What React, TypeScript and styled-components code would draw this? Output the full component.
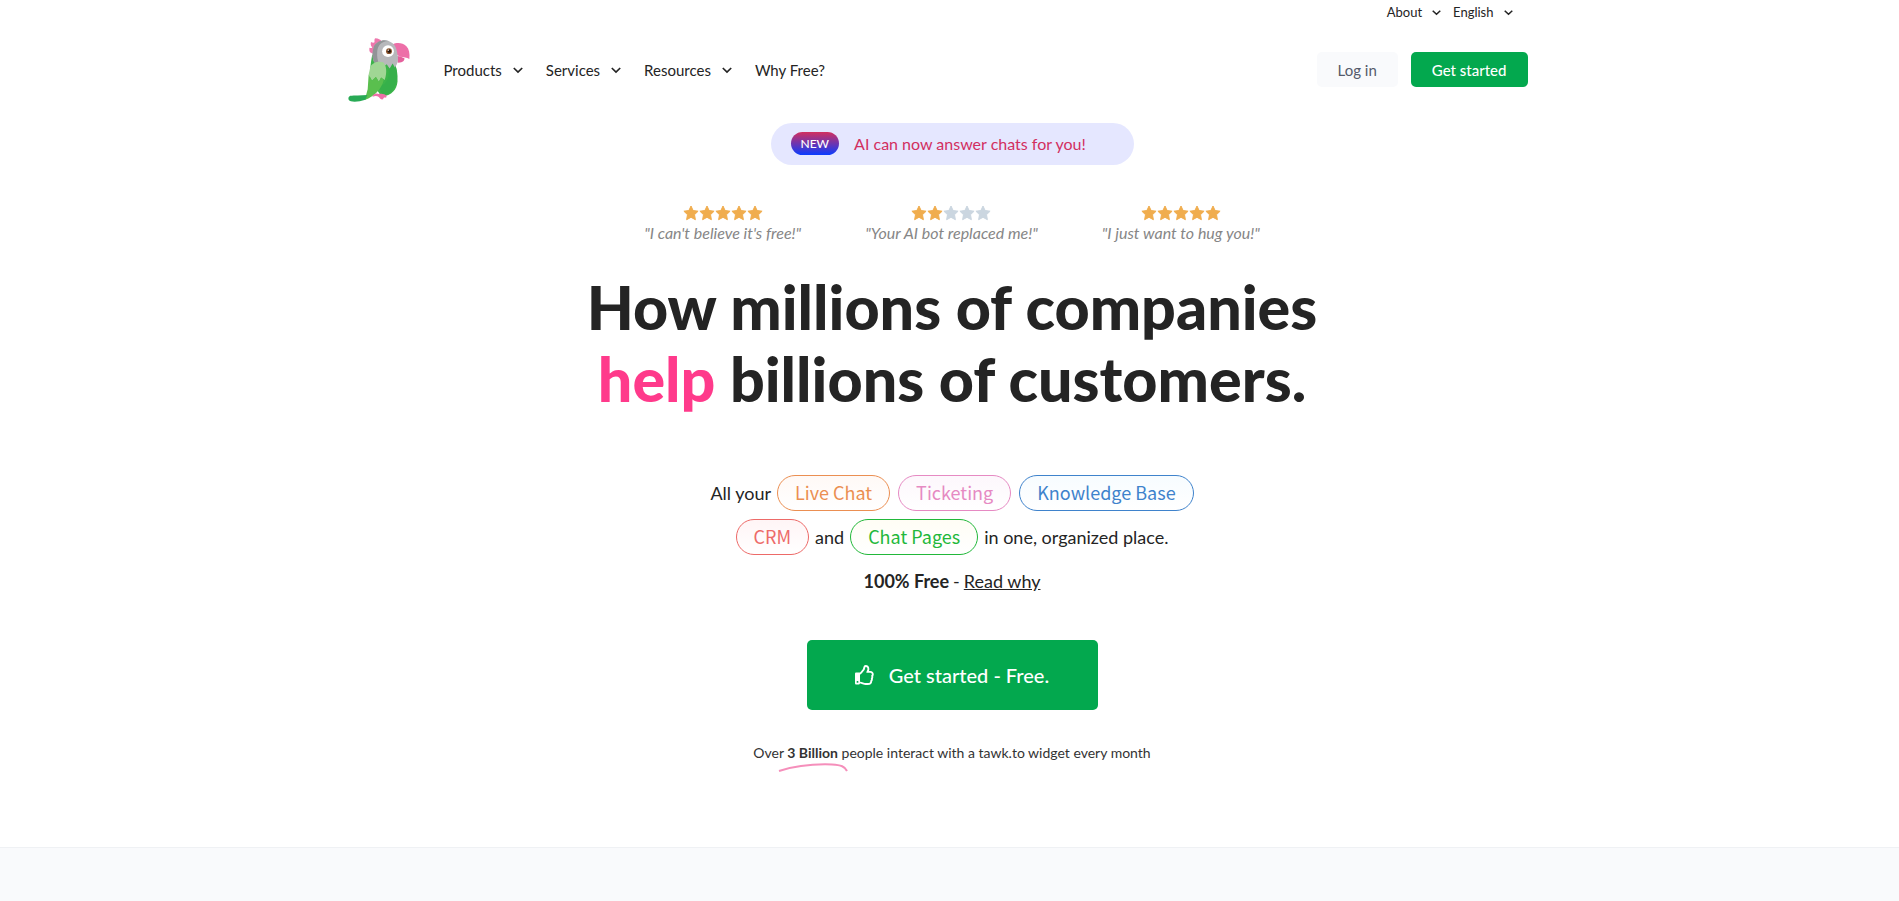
import React from "react";
import styled, { createGlobalStyle } from "styled-components";
import { FaRegThumbsUp } from "react-icons/fa";

const GlobalStyle = createGlobalStyle`
  * { box-sizing: border-box; }
  body {
    margin: 0;
    background: #fff;
    color: #242424;
    font-family: Lato, "Liberation Sans", sans-serif;
  }
  button { font-family: inherit; border: 0; cursor: pointer; }
  a { color: inherit; text-decoration: none; }
`;

const Page = styled.div`
  display: flex;
  flex-direction: column;
  min-height: 100vh;
`;

const Shell = styled.div`
  width: 100%;
  max-width: 1208px;
  margin: 0 auto;
  padding-left: 2px;
`;

const TopBar = styled.nav`
  display: flex;
  justify-content: flex-end;
  align-items: center;
  gap: 12px;
  height: 24px;
  padding-right: 41px;
`;

const Header = styled.header`
  display: flex;
  align-items: center;
  height: 91px;
  padding-right: 26px;
`;

const Logo = styled.a`
  display: flex;
  margin-right: 34px;
`;

const MainNav = styled.nav`
  display: flex;
  gap: 23px;
`;

const MenuButton = styled.button<{ $small?: boolean }>`
  display: flex;
  align-items: center;
  gap: ${(p) => (p.$small ? 10 : 11)}px;
  padding: 0;
  background: none;
  color: inherit;
  font-size: ${(p) => (p.$small ? 13 : 15)}px;
  line-height: 20px;
`;

const MenuLink = styled.a`
  font-size: 15px;
  line-height: 20px;
`;

const Actions = styled.div`
  display: flex;
  gap: 13px;
  margin-left: auto;
`;

const Action = styled.button<{ $primary?: boolean }>`
  height: 35px;
  padding: 0 21px;
  border-radius: 5px;
  font-size: 15px;
  font-weight: ${(p) => (p.$primary ? 500 : 400)};
  color: ${(p) => (p.$primary ? "#fff" : "#545a6b")};
  background: ${(p) => (p.$primary ? "#03a84e" : "#f9fafc")};
`;

const Hero = styled.main`
  display: flex;
  flex-direction: column;
  align-items: center;
  padding: 8px 0 84px 5px;
`;

const Banner = styled.a`
  display: flex;
  align-items: center;
  gap: 15px;
  width: 363px;
  height: 42px;
  padding: 0 0 2px 20px;
  border-radius: 21px;
  background: #e5e7ff;
  color: #d22f5f;
  font-size: 16px;
`;

const NewBadge = styled.span`
  padding: 0 10px;
  border-radius: 12px;
  background: linear-gradient(#d22f5f, #0a3cff);
  color: #fff;
  font-size: 12px;
  font-weight: 500;
  line-height: 23px;
`;

const Reviews = styled.div`
  display: flex;
  gap: 64px;
  margin-top: 40px;
`;

const Review = styled.figure`
  display: flex;
  flex-direction: column;
  align-items: center;
  margin: 0;
`;

const Stars = styled.div`
  display: flex;
`;

const StarShape = styled.svg<{ $on: boolean }>`
  fill: ${(p) => (p.$on ? "#f0ad4e" : "#cbd6e0")};
  stroke: ${(p) => (p.$on ? "#f0ad4e" : "#cbd6e0")};
  stroke-linejoin: round;
`;

const Quote = styled.figcaption`
  color: #868686;
  font-size: 16px;
  font-style: italic;
  line-height: 24px;
`;

const Title = styled.h1`
  margin: 26px 0 0;
  font-size: 61px;
  font-weight: 900;
  line-height: 72px;
  text-align: center;
`;

const Highlight = styled.span`
  color: #ff3a8b;
`;

const Pitch = styled.div`
  display: flex;
  flex-direction: column;
  align-items: center;
  gap: 8px;
  margin-top: 60px;
  font-size: 18px;
`;

const PitchRow = styled.p<{ $gap: number }>`
  display: flex;
  align-items: center;
  gap: ${(p) => p.$gap}px;
  height: 36px;
  margin: 0;
`;

const PitchGroup = styled.span`
  display: flex;
  align-items: center;
  gap: 6px;
`;

const Pill = styled.a<{ $color: string; $tint: string }>`
  height: 36px;
  padding: 0 17px;
  border: 1px solid ${(p) => p.$color};
  border-radius: 18px;
  background: linear-gradient(${(p) => p.$tint}, #fff);
  color: ${(p) => p.$color};
  font-family: "Noto Sans CJK JP", "Noto Sans", sans-serif;
  font-size: 18px;
  line-height: 32px;
`;

const ReadWhy = styled.a`
  text-decoration: underline;
`;

const StartButton = styled.button`
  display: flex;
  align-items: center;
  justify-content: center;
  gap: 14px;
  width: 291px;
  height: 70px;
  margin-top: 41px;
  border-radius: 5px;
  background: #03a84e;
  color: #fff;
  font-size: 20px;
  font-weight: 500;
`;

const Reach = styled.p`
  margin: 33px 0 0;
  font-size: 14px;
  line-height: 20px;
  color: #333;
`;

const Marked = styled.strong`
  position: relative;
`;

const Swash = styled.svg`
  position: absolute;
  left: -9px;
  top: 19px;
`;

const NextSection = styled.section`
  flex: 1;
  min-height: 54px;
  border-top: 1px solid #eff1f4;
  background: #f9fafc;
`;

function Chevron({ size = 10 }: { size?: number }) {
  return (
    <svg width={size} height={size} viewBox="0 0 10 10" fill="none" stroke="currentColor" strokeWidth="1.7" aria-hidden>
      <path d="M.8 3L5 7l4.200-4" />
    </svg>
  );
}

function Star({ on }: { on: boolean }) {
  return (
    <StarShape $on={on} width="16" height="16" viewBox="0 0 16 16">
      <path d="M8 1l2.100 4.500 5 .7-3.600 3.500 .9 5L8 12.300 3.600 14.700l.9-5L.9 6.200l5-.7z" />
    </StarShape>
  );
}

function Parrot() {
  return (
    <svg width="62" height="66" viewBox="38 36 189 197" role="img" aria-label="tawk.to">
      <path d="M112 84C100 80 104 72 103 67c4 1 7 1 9-1-7-9-4-13-4-17 5 3 8 3 11 1-1-7 0-10 2-12 10 1 16 4 19 9l3 12-29 24z" fill="#ee78ad" />
      <path d="M174 57c12-7 30-6 42 5 8 8 11 21 9 39-8-5-17-6-29-7l-18-13z" fill="#ed6fa8" />
      <path d="M188 91c10 3 17 5 22 8 1 7-5 14-21 13z" fill="#e5609c" />
      <path d="M112 88c-4 19-8 49-8 75l36 52c32-1 47-22 49-46 1-22-2-40-10-58z" fill="#3cb44a" />
      <path d="M178 108c17 37 15 94-34 105l-12-28c25-7 35-31 29-60z" fill="#36b04a" />
      <path d="M117 62c11-18 38-24 56-10 12 9 15 25 17 42 1 13-1 23-9 33l-7-12-9 15-9-13-11 8-11-16-10 10-8-12c-5-13-4-31 1-45z" fill="#b7b8bb" />
      <path d="M117 62c9-16 29-22 45-16-24 1-34 15-35 34-1 13 1 27 6 36l-8 3-9-12c-5-13-4-31 1-45z" fill="#929497" />
      <path d="M106 125c6-12 22-19 39-14 10 9 13 29 5 54l-11-8-7 13-9-14-12 11-10-19z" fill="#a0d694" />
      <path d="M101 148l10 19 12-11 9 14 7-13 8 8c-8 29-27 49-58 61l9-33z" fill="#5abf4e" />
      <path d="M45 213c12-2 31 0 52-2l-6 14c-21 7-45 9-51 0-2-5 0-10 5-12z" fill="#28aa55" />
      <path d="M113 213c5-7 13-8 19-5 8-3 18-1 24 5l-2 6c-5-2-8-1-9 5-7 1-9-2-13-7-6-4-11-4-19-1z" fill="#ed70a8" />
      <circle cx="160" cy="77" r="18" fill="#fff" />
      <circle cx="163" cy="77" r="9" fill="#8a542d" />
      <circle cx="164" cy="77" r="5" fill="#24150f" />
      <circle cx="161" cy="74" r="2" fill="#fff" />
    </svg>
  );
}

const reviews = [
  { stars: 5, quote: "\"I can't believe it's free!\"" },
  { stars: 2, quote: '"Your AI bot replaced me!"' },
  { stars: 5, quote: '"I just want to hug you!"' },
];

export default function App() {
  return (
    <Page>
      <GlobalStyle />
      <Shell>
        <TopBar aria-label="Site">
          <MenuButton $small>About <Chevron size={9} /></MenuButton>
          <MenuButton $small>English <Chevron size={9} /></MenuButton>
        </TopBar>
        <Header>
          <Logo href="#"><Parrot /></Logo>
          <MainNav aria-label="Main">
            {["Products", "Services", "Resources"].map((label) => (
              <MenuButton key={label}>{label} <Chevron /></MenuButton>
            ))}
            <MenuLink href="#">Why Free?</MenuLink>
          </MainNav>
          <Actions>
            <Action>Log in</Action>
            <Action $primary>Get started</Action>
          </Actions>
        </Header>
      </Shell>
      <Hero>
        <Banner href="#"><NewBadge>NEW</NewBadge>AI can now answer chats for you!</Banner>
        <Reviews>
          {reviews.map((r) => (
            <Review key={r.quote}>
              <Stars role="img" aria-label={`${r.stars} of 5 stars`}>
                {[1, 2, 3, 4, 5].map((n) => <Star key={n} on={n <= r.stars} />)}
              </Stars>
              <Quote>{r.quote}</Quote>
            </Review>
          ))}
        </Reviews>
        <Title>
          How millions of companies<br />
          <Highlight>help</Highlight> billions of customers.
        </Title>
        <Pitch>
          <PitchRow $gap={8}>
            <PitchGroup>All your <Pill href="#" $color="#eb8f52" $tint="#fff9f6">Live Chat</Pill></PitchGroup>
            <Pill href="#" $color="#e68ac3" $tint="#fdf7fc">Ticketing</Pill>
            <Pill href="#" $color="#3f83cc" $tint="#f7fcff">Knowledge Base</Pill>
          </PitchRow>
          <PitchRow $gap={6}>
            <Pill href="#" $color="#ed6a68" $tint="#fff5f6">CRM</Pill>
            <span>and</span>
            <Pill href="#" $color="#22b83a" $tint="#fffdf5">Chat Pages</Pill>
            <span>in one, organized place.</span>
          </PitchRow>
          <PitchRow $gap={4}>
            <strong>100% Free</strong> - <ReadWhy href="#">Read why</ReadWhy>
          </PitchRow>
        </Pitch>
        <StartButton><FaRegThumbsUp size={20} aria-hidden />Get started - Free.</StartButton>
        <Reach>
          Over{" "}
          <Marked>
            3 Billion
            <Swash width="70" height="10" viewBox="0 0 70 10" fill="none" aria-hidden>
              <path d="M1 8C20 2 40 1 54 1.500c9 .5 13 2 15 6.500" stroke="#f58fbb" strokeWidth="2" />
            </Swash>
          </Marked>{" "}
          people interact with a tawk.to widget every month
        </Reach>
      </Hero>
      <NextSection />
    </Page>
  );
}
